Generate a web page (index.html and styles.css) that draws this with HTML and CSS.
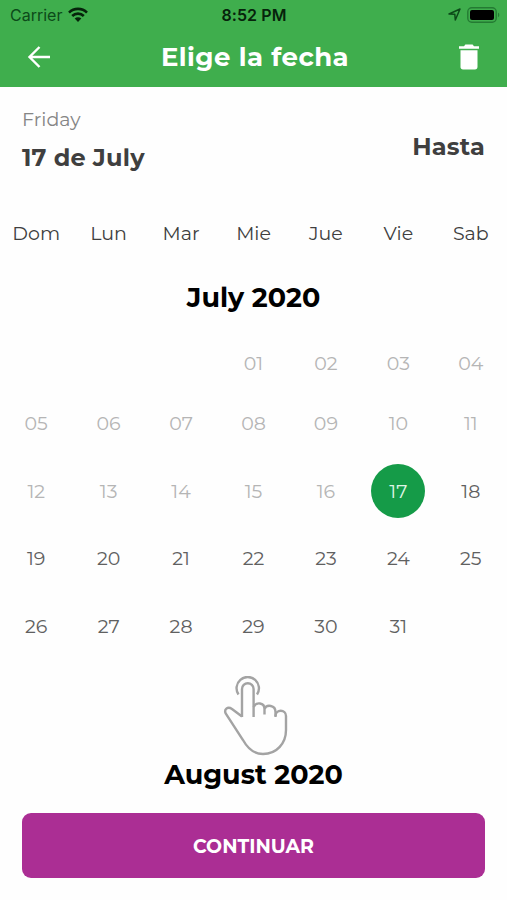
FILE: index.html
```html
<!DOCTYPE html>
<html lang="es">
<head>
  <meta charset="UTF-8">
  <meta name="viewport" content="width=device-width, initial-scale=1.0">
  <title>Elige la fecha</title>
  <link rel="stylesheet" href="styles.css">
</head>
<body>
  <header class="header">
    <div class="status">
      <div class="carrier">
        <span class="carrier-name">Carrier</span>
        <svg width="20" height="16" viewBox="0 0 20 16" fill="none" stroke="#06230b" stroke-width="2.6">
          <path d="M1 5.6a12.8 12.8 0 0 1 18 0" />
          <path d="M4.2 9a8.2 8.2 0 0 1 11.6 0" />
          <path d="M10 15l-3.3-3.4a4.7 4.7 0 0 1 6.6 0z" fill="#06230b" stroke="none" />
        </svg>
      </div>
      <span class="time">8:52 PM</span>
      <div class="indicators">
        <svg width="13" height="13" viewBox="0 0 13 13" fill="none" stroke="#0c4a19" stroke-width="1.5" stroke-linejoin="round">
          <path d="M1 6L12 1L7.3 12L6.8 6.3z" />
        </svg>
        <svg width="33" height="16" viewBox="0 0 33 16">
          <rect x=".8" y=".8" width="28.4" height="14.4" rx="4" fill="none" stroke="#247b33" stroke-width="1.4" />
          <rect x="3" y="3" width="24" height="10" rx="2" fill="#000" />
          <path d="M31 5.8c1.7.6 1.7 3.8 0 4.4z" fill="#247b33" />
        </svg>
      </div>
    </div>
    <div class="navbar">
      <svg width="24" height="24" viewBox="0 0 24 24" fill="none" stroke="#fff" stroke-width="2.4">
        <path d="M23 12H3M12.5 2L2.5 12l10 10" />
      </svg>
      <h1 class="title">Elige la fecha</h1>
      <svg width="20" height="26" viewBox="0 0 20 26" fill="#fff">
        <path d="M0 2.2h5L6.4.6h7.2L15 2.2h5v2.6H0z" />
        <path d="M1.5 6.2h17v16.6a2.6 2.6 0 0 1-2.6 2.6H4.1a2.6 2.6 0 0 1-2.6-2.6z" />
      </svg>
    </div>
  </header>

  <section class="range">
    <div class="from">
      <p class="day-name">Friday</p>
      <p class="date">17 de July</p>
    </div>
    <p class="until">Hasta</p>
  </section>

  <div class="weekdays">
    <span>Dom</span>
    <span>Lun</span>
    <span>Mar</span>
    <span>Mie</span>
    <span>Jue</span>
    <span>Vie</span>
    <span>Sab</span>
  </div>

  <main class="calendar">
    <h2 class="month july">July 2020</h2>
    <div class="days">
      <span class="past first">01</span>
      <span class="past">02</span>
      <span class="past">03</span>
      <span class="past">04</span>
      <span class="past">05</span>
      <span class="past">06</span>
      <span class="past">07</span>
      <span class="past">08</span>
      <span class="past">09</span>
      <span class="past">10</span>
      <span class="past">11</span>
      <span class="past">12</span>
      <span class="past">13</span>
      <span class="past">14</span>
      <span class="past">15</span>
      <span class="past">16</span>
      <span class="selected">17</span>
      <span>18</span>
      <span>19</span>
      <span>20</span>
      <span>21</span>
      <span>22</span>
      <span>23</span>
      <span>24</span>
      <span>25</span>
      <span>26</span>
      <span>27</span>
      <span>28</span>
      <span>29</span>
      <span>30</span>
      <span>31</span>
    </div>
    <svg class="hand" width="66" height="80" viewBox="0 0 66 80" fill="none" stroke="#a3a3a3" stroke-width="2.4">
      <path d="M15.500 18.500A11.200 11.200 0 1 1 34 18.500" />
      <path d="M19 41V13a5.800 5.800 0 0 1 11.600 0V41" />
      <path d="M19 40.500L9 33C4.500 30 .5 33.500 3 38L20 64C25 73 32 78 40 78C54 78 63 67 63 54V40C63 33 52.500 33 52.500 40" />
      <path d="M30.600 31C33 25.500 41.500 26.500 41.500 33V38.500M41.500 33C43.500 28 52.500 29 52.500 36V41" />
    </svg>
    <h2 class="month">August 2020</h2>
  </main>

  <button class="continue">CONTINUAR</button>
</body>
</html>
```
FILE: styles.css
```css
* {
  box-sizing: border-box;
}

body {
  margin: 0;
  height: 900px;
  overflow: hidden;
  background: #fefefe;
  font-family: Montserrat, Inter, sans-serif;
  color: #3f3f3f;
}

h1, h2, p {
  margin: 0;
}

svg {
  display: block;
}

.header {
  height: 87px;
  background: #3fae4d;
}

.status {
  display: grid;
  grid-template-columns: 1fr auto 1fr;
  align-items: center;
  height: 29px;
  padding: 0 7px 0 10px;
  font-family: Inter, sans-serif;
  font-size: 16px;
  color: #06230b;
}

.carrier {
  display: flex;
  align-items: center;
  gap: 6px;
}

.carrier-name {
  color: #0c4a19;
}

.time {
  margin-right: 2px;
  font-weight: 600;
  letter-spacing: 0.1px;
}

.indicators {
  display: flex;
  justify-content: flex-end;
  align-items: center;
  gap: 6px;
}

.navbar {
  display: flex;
  align-items: center;
  justify-content: space-between;
  height: 56px;
  padding: 0 28px 0 27px;
}

.title {
  padding-bottom: 1px;
  font-size: 26px;
  font-weight: 700;
  letter-spacing: 0.45px;
  color: #fff;
}

.range {
  display: flex;
  justify-content: space-between;
  align-items: center;
  height: 120px;
  padding: 0 22px;
}

.from {
  padding-bottom: 13px;
}

.day-name {
  margin-bottom: 11px;
  font-size: 19px;
  line-height: 24px;
  color: #858585;
}

.date,
.until {
  font-size: 24px;
  font-weight: 700;
  line-height: 30px;
  letter-spacing: 0.2px;
}

.weekdays,
.days {
  display: grid;
  grid-template-columns: repeat(7, 1fr);
  text-align: center;
}

.weekdays {
  height: 52px;
  line-height: 53px;
  font-size: 19px;
}

.month {
  font-size: 27px;
  font-weight: 700;
  line-height: 36px;
  text-align: center;
  color: #000;
}

.july {
  margin: 21px 0 20px;
}

.days {
  grid-template-rows: 54px repeat(4, 67.5px);
  place-items: center;
  font-size: 19px;
  color: #606060;
}

.first {
  grid-column: 4;
}

.past {
  color: #b5b5b5;
}

.selected {
  width: 54px;
  height: 54px;
  border-radius: 50%;
  background: #159b48;
  line-height: 55px;
  color: #dff5e5;
}

.hand {
  margin: 16px 0 1px 223px;
}

.continue {
  display: block;
  width: 463px;
  height: 65px;
  margin: 20px 0 0 22px;
  padding-top: 3px;
  border: 0;
  border-radius: 9px;
  background: #ab2e94;
  font-family: inherit;
  font-size: 19px;
  font-weight: 700;
  color: #fff;
}
```
